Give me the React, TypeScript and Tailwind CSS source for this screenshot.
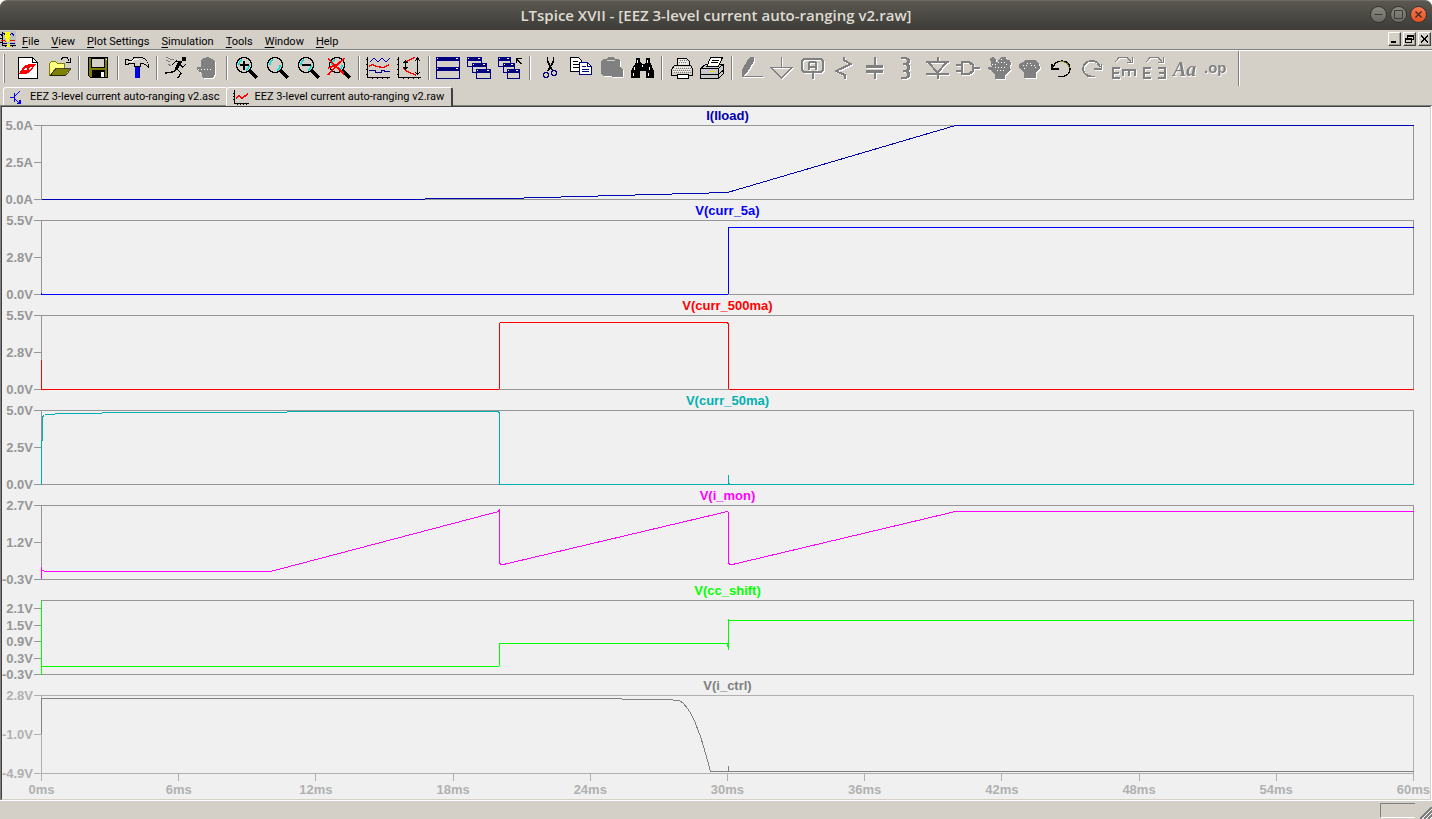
import React from "react";

type Pane = {
  title: string;
  titleClass: string;
  stroke: string;
  labels: string[];
  points: string;
  spikes?: string;
  selected?: boolean;
};

const panes: Pane[] = [
  {
    title: "I(Iload)",
    titleClass: "text-[#0000b0]",
    stroke: "#0000b0",
    labels: ["5.0A", "2.5A", "0.0A"],
    points: "0,74 383,74 384,73 464,73 686,67 914,0 1372,0",
  },
  {
    title: "V(curr_5a)",
    titleClass: "text-[#0000ff]",
    stroke: "#0000ff",
    labels: ["5.5V", "2.8V", "0.0V"],
    points: "0,72 0,74 686,74 687,73 687,7 1372,7",
  },
  {
    title: "V(curr_500ma)",
    titleClass: "text-[#ff0000]",
    stroke: "#ff0000",
    labels: ["5.5V", "2.8V", "0.0V"],
    points: "0,44 0,74 457,74 458,73 458,8 459,7 686,7 687,9 687,73 688,74 1372,74",
  },
  {
    title: "V(curr_50ma)",
    titleClass: "text-[#00b0b0]",
    stroke: "#00b0b0",
    labels: ["5.0V", "2.5V", "0.0V"],
    points: "0,74 0,30 1,30 1,6 3,5 4,4 13,4 14,3 60,3 61,2 245,2 246,1 457,1 458,3 458,74 1372,74",
    spikes: "M687 64V74M686 73H688",
  },
  {
    title: "V(i_mon)",
    titleClass: "text-[#ff00ff]",
    stroke: "#ff00ff",
    labels: ["2.7V", "1.2V", "-0.3V"],
    points:
      "0,73 0,61 0,65 2,65 3,66 229,66 457,6 458,4 458,58 460,59 462,59 686,6 687,7 687,58 689,59 691,59 914,6 1372,6",
  },
  {
    title: "V(cc_shift)",
    titleClass: "text-[#00ff00]",
    stroke: "#00ff00",
    labels: ["2.1V", "1.5V", "0.9V", "0.3V", "-0.3V"],
    points: "0,0 0,74 0,66 457,66 458,65 458,43 686,43 687,49 687,19 688,20 1372,20",
  },
  {
    title: "V(i_ctrl)",
    titleClass: "text-[#808080]",
    stroke: "#808080",
    labels: ["2.8V", "-1.0V", "-4.9V"],
    points:
      "0,38 0,3 580,3 581,4 631,4 632,5 638,5 642,8 646,13 650,19 654,28 659,41 662,51 666,65 669,76 1372,76",
    spikes: "M687 70V76",
    selected: true,
  },
];

const times = ["0ms", "6ms", "12ms", "18ms", "24ms", "30ms", "36ms", "42ms", "48ms", "54ms", "60ms"];

function PlotPane({ pane }: { pane: Pane }) {
  const h = pane.selected ? 79 : 75;
  const five = pane.labels.length === 5;
  const tone = pane.selected ? "text-[#b0b0b0]" : "text-[#969696]";
  return (
    <section className={pane.selected ? "" : "pb-[2px]"}>
      <h2 className={`ml-[39px] mr-4 h-[18px] text-center text-[13px] leading-[18px] font-bold ${pane.titleClass}`}>
        {pane.title}
      </h2>
      <div className={`flex pr-4 ${pane.selected ? "h-[79px]" : "h-[75px]"} ${tone}`}>
        <ul className={`-mb-[7px] flex w-[39px] shrink-0 flex-col justify-between ${five ? "mt-[1px]" : "-mt-[7px]"}`}>
          {pane.labels.map((l) => (
            <li key={l} className="flex h-[15px] items-center justify-end gap-px text-[13px] leading-[15px] font-bold whitespace-nowrap">
              {l}
              <span className="h-px w-[7px] shrink-0 bg-current" />
            </li>
          ))}
        </ul>
        <svg
          className="h-full min-w-0 flex-1"
          viewBox={`-0.5 -0.5 1373 ${h}`}
          preserveAspectRatio="none"
          fill="none"
          shapeRendering="crispEdges"
          aria-label={pane.title}
        >
          <rect x="0" y="0" width="1372" height={h - 1} stroke="currentColor" vectorEffect="non-scaling-stroke" />
          <polyline points={pane.points} stroke={pane.stroke} vectorEffect="non-scaling-stroke" />
          {pane.spikes && <path d={pane.spikes} stroke={pane.stroke} vectorEffect="non-scaling-stroke" />}
        </svg>
      </div>
    </section>
  );
}

/* ---------- toolbar drawings, on a 25 x 24 grid ---------- */

const Lens = ({ children }: { children?: React.ReactNode }) => (
  <>
    <path d="M15.5 14.5l7.500 7.500" stroke="#000" strokeWidth="3" />
    <circle cx="10" cy="9" r="7.500" fill="#d4d0c8" stroke="#000" strokeWidth="1.300" />
    <path d="M5 9a5 5 0 0 1 3-5M15 9a5 5 0 0 1-3 5" stroke="#00e0e0" strokeWidth="1.500" />
    {children}
  </>
);

const Win = ({ x, y, w = 14, h = 10 }: { x: number; y: number; w?: number; h?: number }) => (
  <>
    <rect x={x + 0.5} y={y + 0.5} width={w} height={h - 1} fill="#d4d0c8" stroke="#000080" />
    <path d={`M${x} ${y + 2}h${w + 1}`} stroke="#000080" strokeWidth="4" />
    <path d={`M${x + w - 3} ${y + 1.5}h2M${x + 1} ${y + 1.5}h1`} stroke="#fff" />
  </>
);

const G = "#808080";

const art: Record<string, React.ReactNode> = {
  New: (
    <>
      <path d="M2.500 1.500H16.500L21.500 6.500V22.500H2.500Z" fill="#fff" stroke="#000" />
      <path d="M16.500 1.500V6.500H21.500" stroke="#000" />
      <path d="M3 17.500L8 10L13 8H20L15 15L11 17.500Z" fill="#f00" />
      <path d="M7 14.500L10 11.500H12L10.500 14ZM12 14.500L13.500 12L16 10.500L15 13Z" fill="#fff" />
    </>
  ),
  Open: (
    <>
      <path d="M2.500 18.500V7.500L4.500 5.500H8.500L10.500 7.500H17.500V12" fill="#ffff80" stroke="#808000" />
      <path d="M2.500 19.500L8 12.500H23.500L18 19.500Z" fill="#808000" stroke="#000" strokeWidth=".7" />
      <path d="M14 3.500L16 1.500H20L22.500 5.500M19 6H23.500V2" stroke="#000" />
    </>
  ),
  Save: (
    <>
      <path d="M2.500 1.500H21.500V21.500H4.500L2.500 19.500Z" fill="#808000" stroke="#000" />
      <path d="M5.500 2H18.500V11.500H5.500Z" fill="#d4d0c8" stroke="#000" />
      <path d="M6 14H19V21H6Z" fill="#000" />
      <path d="M15 16h3v5h-3z" fill="#fff" />
      <path d="M19.500 3.500h1" stroke="#fff" />
    </>
  ),
  "Control Panel": (
    <>
      <path d="M10 10H15V22H10Z" fill="#00f" />
      <path d="M14.500 10V22" stroke="#000080" />
      <path d="M.5 3.500V8.500H3L5 7H9.500V10.500H15V7.500C19 7 21 8 23.500 11.500C23.500 5 20 1.500 15 1.500H9L7 4H3.500Z" fill="#d4d0c8" stroke="#000" />
      <path d="M4 5.500H7L9 3.500H14" stroke="#fff" />
    </>
  ),
  Run: (
    <>
      <path d="M18 1h4v4h-4z" fill="#000" />
      <path d="M18 6L12 5L8 9M17 6L13 13L17 17L14 22M13 13L9 16L1 17M16 9L19 11L22 8" stroke="#000" strokeWidth="1.400" />
      <path d="M16 6L12 13" stroke="#000" strokeWidth="3" />
      <path d="M2 1l4 2 4 0M2 4l4 2M4 8l3 2" stroke={G} />
    </>
  ),
  Halt: (
    <>
      <path d="M7 21V17L2 14V11H6V4L9 2L13 1L17 3L20 6V18L18 22H8Z" fill={G} />
      <path d="M3 13.500h1M6 13.500h1M9 13.500h1M12 13.500h1M15 13.500h1" stroke="#fff" />
    </>
  ),
  "Zoom in": (
    <Lens>
      <path d="M10 4.500V13.500M5.500 9H14.500" stroke="#000" strokeWidth="2" />
    </Lens>
  ),
  "Zoom area": <Lens />,
  "Zoom out": (
    <Lens>
      <path d="M5.500 9H14.500" stroke="#000" strokeWidth="2" />
    </Lens>
  ),
  "Zoom full": (
    <Lens>
      <path d="M1 2.500L17 18M17.500 2L10 9L1 19M1 12L9 9" stroke="#f00" strokeWidth="1.700" />
    </Lens>
  ),
  Autorange: (
    <>
      <path d="M1.500 1V21.500H24M0 3.500H2M0 8.500H2M0 13.500H2M0 18.500H2M6.500 21V23M11.500 21V23M16.500 21V23M21.500 21V23" stroke="#000" />
      <path d="M4 6L8 2L12 6L16 2L20 6L24 2" stroke="#0000c0" />
      <path d="M3 10.500L6 8.500L11 10.500L17 11.500L23 9" stroke="#f00" strokeWidth="1.300" />
      <path d="M3 14.500H9V16.500H15V14.500H18V15.500H24" stroke="#000080" />
    </>
  ),
  "Plot limits": (
    <>
      <path d="M1.500 1V21.500H24M0 3.500H2M0 8.500H2M0 13.500H2M0 18.500H2M6.500 21V23M11.500 21V23M16.500 21V23M21.500 21V23" stroke="#000" />
      <path d="M18 1.500L8 6M6 12L11 16L19 19" stroke="#f00" strokeWidth="1.400" />
      <path d="M8.500 5V13M6.500 7L8.500 5L10.500 7M6.500 11L8.500 13L10.500 11M20.500 2V18.500M18 5L20.500 2L23 5M18 16L20.500 18.500L23 16" stroke="#000" />
    </>
  ),
  Tile: (
    <>
      <Win x={0} y={1} w={23} h={11} />
      <Win x={0} y={11} w={23} h={12} />
    </>
  ),
  Cascade: (
    <>
      <Win x={0} y={1} />
      <Win x={5} y={7} />
      <Win x={9} y={13} />
    </>
  ),
  "Close all": (
    <>
      <Win x={0} y={1} w={12} />
      <Win x={5} y={7} w={11} />
      <Win x={9} y={13} w={12} />
      <path d="M23.500 8L19 3M18.500 7V2.500H24" stroke="#000" strokeWidth="1.300" />
    </>
  ),
  Cut: (
    <>
      <path d="M10.500 1V5L15 14M16.500 1V5L11 15" stroke="#000" strokeWidth="1.700" />
      <circle cx="9" cy="19" r="2.500" stroke="#000080" strokeWidth="1.500" />
      <circle cx="17" cy="17" r="2.500" stroke="#000080" strokeWidth="1.500" />
    </>
  ),
  Copy: (
    <>
      <path d="M2.500 1.500H10.500L13.500 4.500V15.500H2.500Z" fill="#fff" stroke="#000" />
      <path d="M5 5.500H10M5 8.500H11M5 11.500H11" stroke="#000" />
      <path d="M11.500 6.500H19.500L23.500 10.500V18.500H11.500Z" fill="#fff" stroke="#000080" />
      <path d="M19.500 6.500V10.500H23.500M13.500 10.500H18M13.500 13.500H21M13.500 15.500H21" stroke="#000080" />
    </>
  ),
  Paste: (
    <>
      <path d="M2 5L4 3H8L9 1H15L16 3H19L21 5V11L24 13V21H13V20H4L2 18Z" fill={G} />
      <path d="M8 4.500H16" stroke="#d4d0c8" />
    </>
  ),
  Find: (
    <>
      <path d="M6 2H10V6L12 8H14L16 6V2H20V6L24 15V22H16V15H10V22H1V15L6 6Z" fill="#000" />
      <path d="M7.500 4V7M17.500 4V7M4.500 11V14M19.500 11V14M3.500 17V20M18.500 17V20M12.500 9V11" stroke="#fff" />
    </>
  ),
  Print: (
    <>
      <path d="M8.500 10V2.500H17.500L20.500 5.500V10" fill="#e4e2de" stroke="#000" />
      <path d="M2.500 13.500L5.500 9.500H21.500L23.500 12.500V19.500H2.500Z" fill="#d4d0c8" stroke="#000" />
      <path d="M8.500 18.500H19.500V22.500H8.500Z" fill="#fff" stroke="#000" />
      <path d="M10 5.500H18M11 7.500H19M6 11.500H22M5 13.500H22M4 15.500H22" stroke="#fff" strokeDasharray="1 1" />
      <path d="M11 4.500H18M10 6.500H18M7 12.500H22M4 14.500H22M5 16.500H22" stroke="#808080" strokeDasharray="1 1" />
    </>
  ),
  "Print setup": (
    <>
      <path d="M.5 12.500L5.500 8.500H23.500V17.500L18.500 22.500H.5Z" fill="#c8c8c8" stroke="#000" />
      <path d="M7 10.500L10.500 1.500H22.500L18.500 10.500Z" fill="#fff" stroke="#000" />
      <path d="M12 4.500H19M11 6.500H18" stroke="#000" />
      <path d="M.5 12.500H18.500V22M18.500 12.500L23.500 8M1 18.500H18.500L23.500 14" stroke="#000" />
      <path d="M10 15.500H15" stroke="#e8e000" strokeWidth="1.500" />
    </>
  ),
  Wire: <path d="M3 21V14L9 3L12 1H15V5L8 17L5 19.500H24V21Z" fill={G} />,
  Ground: <path d="M11.500 1V11.500M1 11.500H22L11.500 22Z" stroke={G} strokeWidth="1.700" />,
  "Label net": (
    <>
      <path d="M3 3H20L22 5V14L20 16H3L1 14V5ZM11.500 16V23" stroke={G} strokeWidth="2" />
      <path d="M8 14V7L9 6H14L15 7V14M8 11H15" stroke={G} strokeWidth="2" />
    </>
  ),
  Resistor: <path d="M11.500 1V4L19 8L4 15L12.500 19V22.500" stroke={G} strokeWidth="2" />,
  Capacitor: (
    <>
      <path d="M3 10.500H20M3 15.500H20" stroke={G} strokeWidth="2.400" />
      <path d="M11.500 1V10M11.500 16V23" stroke={G} strokeWidth="2" />
    </>
  ),
  Inductor: <path d="M7 2H12L14.500 4V6L12 8H9M12 8L14.500 10V13L12 15H9M12 15L14.500 17V20L12 22H7" stroke={G} strokeWidth="2.400" />,
  Diode: <path d="M12.500 1V6M1 6H24M3.500 6H21.500L12.500 17ZM1 18H24M12.500 18V23" stroke={G} strokeWidth="2" />,
  Component: <path d="M6 6H13L17 9V15L13 18H6ZM0 9H6M0 15H6M17 12H24" stroke={G} strokeWidth="2.400" />,
  Move: (
    <>
      <path d="M8 23V19L5 15L1 13V11H5L4 9V5H3V2L6 1L9 3V6H11V4L14 1H19L20 4H23L24 8L23 11L24 14L18 19V23Z" fill={G} />
      <path d="M5 8.500h6M11 6.500h8M8 11.500h11M19 8.500h3M10 14.500h8M14 3.500h3" stroke="#fff" strokeDasharray="1 2" />
    </>
  ),
  Drag: (
    <>
      <path d="M6 22V17L1 12V8L5 6L8 4H17L21 7L22 12L18 16V22Z" fill={G} />
      <path d="M5 9.500h4M9 7.500h4M13 9.500h4M6 12.500h3M17 11.500h3" stroke="#fff" strokeDasharray="1 2" />
    </>
  ),
  Undo: (
    <>
      <path d="M4 11C6 6 10 5 13 5C18 5 21 8 21 13C21 18 17 20.500 13 20.500H9" stroke="#000" strokeWidth="1.300" />
      <path d="M11 5.500C16 5 20 8 20.500 12" stroke="#808000" />
      <path d="M3 8V13H10" stroke="#000" strokeWidth="1.700" />
    </>
  ),
  Redo: <path d="M20 11C18 6 15 5 12 5C6 5 3 9 3 13C3 17 7 20.500 11 20.500H15M21.500 8V13H14" stroke={G} strokeWidth="1.800" />,
  Rotate: (
    <>
      <path d="M9 12H2V22H9M2 17H8M12 20V14H24V20M18 14V20" stroke={G} strokeWidth="2.400" />
      <path d="M4 6L8 1.500H16L20 5.500M16 6H21V1" stroke={G} />
    </>
  ),
  Mirror: (
    <>
      <path d="M9 12H2V22H9M2 17H8M16 12H23V22H16M23 17H17" stroke={G} strokeWidth="2.400" />
      <path d="M4 6L8 1.500H16L20 5.500M16 6H21V1" stroke={G} />
    </>
  ),
  Text: (
    <text x="0" y="20" fill={G} className="font-['Liberation_Serif',serif] text-[20px] font-bold italic">Aa</text>
  ),
  "SPICE directive": (
    <text x="0" y="17" fill={G} className="font-['Liberation_Sans',sans-serif] text-[15px] font-bold">.op</text>
  ),
};

const groups: string[][] = [
  ["New", "Open"],
  ["Save"],
  ["Control Panel"],
  ["Run", "Halt"],
  ["Zoom in", "Zoom area", "Zoom out", "Zoom full"],
  ["Autorange", "Plot limits"],
  ["Tile", "Cascade", "Close all"],
  ["Cut", "Copy", "Paste", "Find"],
  ["Print", "Print setup"],
  [
    "Wire", "Ground", "Label net", "Resistor", "Capacitor", "Inductor", "Diode", "Component",
    "Move", "Drag", "Undo", "Redo", "Rotate", "Mirror", "Text", "SPICE directive",
  ],
];

const disabled = new Set([
  "Halt", "Paste", "Wire", "Ground", "Label net", "Resistor", "Capacitor", "Inductor", "Diode",
  "Component", "Move", "Drag", "Redo", "Rotate", "Mirror", "Text", "SPICE directive",
]);

function Toolbar() {
  return (
    <div className="flex h-9 items-start border-t border-white pl-[3px]" role="toolbar">
      <div className="mt-[3px] mr-[8px] h-[29px] w-[2px] border-r border-[#808080] border-l border-l-white" />
      {groups.map((g, i) => (
        <div key={g[0]} className="flex">
          {i > 0 && (
            <div className="flex w-2 justify-center pt-[5px]">
              <div className="h-6 w-[2px] border-r border-l border-r-white border-l-[#808080]" />
            </div>
          )}
          {g.map((name) => (
            <button
              key={name}
              type="button"
              aria-label={name}
              disabled={disabled.has(name)}
              className="flex h-[34px] w-[31px] items-start justify-center pt-[5px]"
            >
              <svg
                viewBox="0 0 25 24"
                fill="none"
                shapeRendering="crispEdges"
                className={`h-6 w-[25px] overflow-visible ${disabled.has(name) ? "drop-shadow-[1px_1px_0_#fff]" : ""}`}
              >
                {art[name]}
              </svg>
            </button>
          ))}
        </div>
      ))}
      <div className="ml-[6px] h-[35px] w-[2px] border-r border-l border-r-white border-l-[#808080]" />
    </div>
  );
}

const menus = ["File", "View", "Plot Settings", "Simulation", "Tools", "Window", "Help"];

function MdiButton({ label, children }: { label: string; children: React.ReactNode }) {
  return (
    <button
      type="button"
      aria-label={label}
      className="h-[14px] w-[13px] border border-t-white border-r-[#404040] border-b-[#404040] border-l-white shadow-[inset_-1px_-1px_0_#a09c94]"
    >
      <svg viewBox="0 0 11 12" fill="none" stroke="#000" shapeRendering="crispEdges" className="h-3 w-[11px]">
        {children}
      </svg>
    </button>
  );
}

export default function App() {
  return (
    <div className="flex min-h-screen flex-col bg-[#d4d0c8] font-['Liberation_Sans',Arial,sans-serif]">
      <div className="bg-white">
        <header className="relative flex h-[30px] items-center justify-center rounded-t-[7px] border-t border-[#6b6961] bg-linear-to-b from-[#5a5850] to-[#3d3c38] pb-[2px]">
          <h1 className="font-['Open_Sans','Noto_Sans',sans-serif] text-[15px] leading-5 font-semibold text-[#dfdbd2]">
            LTspice XVII - [EEZ 3-level current auto-ranging v2.raw]
          </h1>
          <div className="absolute top-[5px] right-[5px] flex gap-[3px]">
            <button type="button" aria-label="Minimize" className="size-[17px] rounded-full border border-[#33322e] bg-linear-to-b from-[#8b8980] to-[#6b6a63]">
              <svg viewBox="0 0 15 15" fill="none" stroke="#3c3b37" className="size-[15px]"><path d="M3.500 7.500H11.500" /></svg>
            </button>
            <button type="button" aria-label="Maximize" className="size-[17px] rounded-full border border-[#33322e] bg-linear-to-b from-[#8b8980] to-[#6b6a63]">
              <svg viewBox="0 0 15 15" fill="none" stroke="#3c3b37" className="size-[15px]"><path d="M3.500 3.500H11.500V11.500H3.500Z" /></svg>
            </button>
            <button type="button" aria-label="Close" className="size-[17px] rounded-full border border-[#33322e] bg-linear-to-b from-[#f6794f] to-[#e2511f]">
              <svg viewBox="0 0 15 15" fill="none" stroke="#3c2a20" strokeWidth="1.300" className="size-[15px]"><path d="M4.500 4.500L10.500 10.500M10.500 4.500L4.500 10.500" /></svg>
            </button>
          </div>
        </header>
      </div>

      <div className="flex h-5 border-b border-[#808080] font-['Roboto','Noto_Sans',sans-serif] text-[11px]">
        <svg viewBox="0 0 16 16" fill="none" shapeRendering="crispEdges" className="mt-px size-4">
          <path d="M0 0H16V16H0Z" fill="#c0c0c0" />
          <path d="M2.500 1V14.500H16M0 3.500H2M0 7.500H2M0 11.500H2M5.500 14V16M12.500 14V16" stroke="#000" />
          <path d="M1 5L4 2L6 6M10 4L12 2L14 5" stroke="#0000c0" />
          <path d="M1 10L4 9L6 11M10 10L15 9" stroke="#f00" />
          <path d="M3 12.500H7M10 12.500H15" stroke="#000080" />
          <path d="M5 1H10V5L9 11H7L5 5ZM7 13H10V16H7Z" fill="#ff0" />
        </svg>
        <nav className="flex gap-3 pt-px pl-[6px]">
          {menus.map((m) => (
            <button key={m} type="button" className="leading-[21px] text-black">
              <span className="underline underline-offset-2">{m[0]}</span>
              {m.slice(1)}
            </button>
          ))}
        </nav>
        <div className="mt-[2px] mr-px ml-auto flex gap-[2px]">
          <MdiButton label="Minimize document"><path d="M2 9H7" strokeWidth="2" /></MdiButton>
          <MdiButton label="Restore document"><path d="M3.500 5V2.500H9.500V6.500H8M1.500 5.500H7.500V9.500H1.500ZM3 3.500H10M1 6.500H8" /></MdiButton>
          <MdiButton label="Close document"><path d="M2 2.500L9 9.500M9 2.500L2 9.500" strokeWidth="1.800" /></MdiButton>
        </div>
      </div>

      <Toolbar />

      <div className="flex h-5 items-end pl-[3px] font-['Roboto','Noto_Sans',sans-serif] text-[11px] text-black shadow-[inset_0_-1px_0_#808080]" role="tablist">
        <button type="button" role="tab" aria-selected="false" className="mb-px flex h-[18px] items-center gap-[7px] rounded-tl-[3px] border-t border-l border-white pt-[2px] pr-[7px] pl-[5px]">
          <svg viewBox="0 0 14 16" fill="none" stroke="#00f" strokeWidth="1.300" shapeRendering="crispEdges" className="h-4 w-[14px]">
            <path d="M1 7.500H5M5.500 3V12M6 6L11 1M6 9L11 14M8 13.500H11V10" />
          </svg>
          EEZ 3-level current auto-ranging v2.asc
        </button>
        <button type="button" role="tab" aria-selected="true" className="flex h-[19px] items-center gap-[5px] rounded-t-[3px] border-t border-r-2 border-l border-white border-r-[#404040] bg-[#d4d0c8] pt-px pr-[7px] pl-[6px]">
          <svg viewBox="0 0 16 16" fill="none" shapeRendering="crispEdges" className="size-4">
            <path d="M1.500 0V13.500H16M0 3.500H2M0 6.500H2M0 9.500H2M4.500 13V15M7.500 13V15M10.500 13V15M13.500 13V15" stroke="#000" />
            <path d="M3 8.500L6 5.500L9 8L12 6L15 3.500" stroke="#f00" strokeWidth="1.500" />
          </svg>
          EEZ 3-level current auto-ranging v2.raw
        </button>
      </div>

      <main className="flex-1 border-b border-white bg-[#f0f0f0]">
        <div className="h-full border-r border-l border-r-white border-l-[#808080]">
          <div className="h-full border border-t-[#404040] border-r-[#d4d0c8] border-b-[#d4d0c8] border-l-[#404040]">
            {panes.map((p) => (
              <PlotPane key={p.title} pane={p} />
            ))}
            <ul className="mr-4 ml-[39px] flex h-[25px] justify-between text-[13px] font-bold text-[#b0b0b0]">
              {times.map((t) => (
                <li key={t} className="flex w-px flex-col items-center">
                  <span className="h-[7px] w-px shrink-0 bg-current" />
                  <span className="leading-[18px]">{t}</span>
                </li>
              ))}
            </ul>
          </div>
        </div>
      </main>

      <footer className="flex h-[18px] items-end justify-end">
        <div className="mr-[5px] mb-[1px] h-[15px] w-[35px] border-t border-b border-l border-t-[#808080] border-b-white border-l-[#808080]" />
        <svg viewBox="0 0 12 12" fill="none" shapeRendering="crispEdges" className="size-3">
          <path d="M0 12L12 0M4 12L12 4M8 12L12 8" stroke="#808080" strokeWidth="1.500" />
          <path d="M2 12L12 2M6 12L12 6M10 12L12 10" stroke="#fff" />
        </svg>
      </footer>
    </div>
  );
}
